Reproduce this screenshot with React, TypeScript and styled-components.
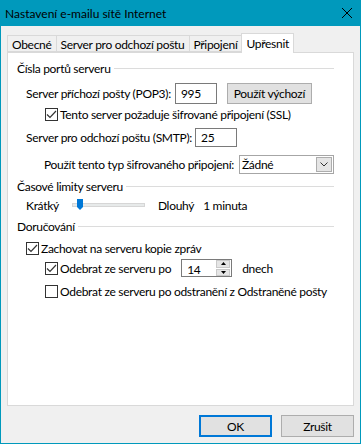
import styled, { createGlobalStyle } from "styled-components";

const GlobalStyle = createGlobalStyle`
  html, body {
    margin: 0;
    padding: 0;
    background: #ffffff;
  }
  body {
    font-family: Lato, "Noto Sans", sans-serif;
    font-size: 12px;
    letter-spacing: -0.3px;
    color: #000000;
  }
  * {
    box-sizing: border-box;
  }
`;

const Frame = styled.div`
  width: 361px;
  height: 444px;
  background: #0099bc;
  padding: 0 1px 1px 1px;
  display: flex;
  flex-direction: column;
`;

const TitleBar = styled.div`
  height: 26px;
  flex: none;
  display: flex;
  align-items: center;
  justify-content: space-between;
  padding: 0 8px 0 4px;
  color: #000000;
  letter-spacing: 0;
`;

const Client = styled.div`
  flex: 1;
  background: #f0f0f0;
  padding: 7px 6px 0 6px;
  display: flex;
  flex-direction: column;
`;

const TabStrip = styled.div`
  display: flex;
  align-items: flex-end;
  height: 19px;
  position: relative;
  z-index: 1;
`;

const Tab = styled.div<{ $active?: boolean }>`
  height: ${(p) => (p.$active ? "20px" : "17px")};
  margin-bottom: ${(p) => (p.$active ? "-1px" : "0")};
  padding: 0 4px;
  display: flex;
  align-items: center;
  padding-top: ${(p) => (p.$active ? "0" : "1px")};
  background: ${(p) => (p.$active ? "#ffffff" : "#f0f0f0")};
  border: 1px solid #d9d9d9;
  border-bottom: ${(p) => (p.$active ? "none" : "1px solid #d9d9d9")};
  margin-left: -1px;
  &:first-child {
    margin-left: 0;
  }
`;

const Panel = styled.div`
  height: 354px;
  background: #ffffff;
  border: 1px solid #d9d9d9;
  padding: 7px 19px 0 9px;
  display: flex;
  flex-direction: column;
`;

const GroupHeading = styled.div<{ $top?: number }>`
  display: flex;
  align-items: center;
  height: 16px;
  margin-top: ${(p) => p.$top ?? 0}px;
  gap: 3px;
  &::after {
    content: "";
    flex: 1;
    height: 1px;
    background: #dcdcdc;
  }
`;

const Row = styled.div<{ $indent: number; $top: number; $h: number }>`
  display: flex;
  align-items: center;
  height: ${(p) => p.$h}px;
  margin-top: ${(p) => p.$top}px;
  padding-left: ${(p) => p.$indent}px;
  white-space: nowrap;
`;

const TextBox = styled.div<{ $w: number; $h: number; $ml: number }>`
  width: ${(p) => p.$w}px;
  height: ${(p) => p.$h}px;
  margin-left: ${(p) => p.$ml}px;
  border: 1px solid #7a7a7a;
  background: #ffffff;
  padding-left: 5px;
  display: flex;
  align-items: center;
`;

const Button = styled.div<{ $default?: boolean }>`
  height: 21px;
  display: flex;
  align-items: center;
  justify-content: center;
  background: #e1e1e1;
  border: ${(p) => (p.$default ? "2px solid #0078d7" : "1px solid #adadad")};
`;

const SideButton = styled(Button)`
  width: 85px;
  margin-left: 10px;
`;

const CheckBox = styled.div`
  width: 13px;
  height: 13px;
  flex: none;
  border: 1px solid #333333;
  background: #ffffff;
  margin-right: 2px;
  display: flex;
  align-items: center;
  justify-content: center;
`;

const Select = styled.div`
  width: 96px;
  height: 19px;
  margin-left: 5px;
  border: 1px solid #a6a6a6;
  background: #ffffff;
  display: flex;
  align-items: center;
  padding: 1px 1px 1px 2px;
`;

const SelectValue = styled.span`
  flex: 1;
`;

const DropButton = styled.div`
  width: 16px;
  height: 15px;
  background: #e5e5e5;
  border: 1px solid #adadad;
  display: flex;
  align-items: center;
  justify-content: center;
`;

const SliderTrack = styled.div`
  position: relative;
  width: 73px;
  height: 4px;
  margin-left: 13px;
  margin-right: 13px;
  background: #e7eaea;
  border: 1px solid #d6d6d6;
`;

const Thumb = styled.svg`
  position: absolute;
  left: 4px;
  top: -5px;
`;

const Spin = styled.div`
  width: 51px;
  height: 18px;
  margin-left: 10px;
  margin-right: 10px;
  border: 1px solid #7a7a7a;
  background: #ffffff;
  display: flex;
  align-items: stretch;
`;

const SpinText = styled.span`
  flex: 1;
  padding-left: 5px;
  display: flex;
  align-items: center;
  padding-top: 2px;
`;

const SpinArrows = styled.div`
  width: 15px;
  display: flex;
  flex-direction: column;
  gap: 1px;
  padding: 0 1px 0 0;
`;

const SpinArrow = styled.div`
  flex: 1;
  background: #e5e5e5;
  border: 1px solid #c9c9c9;
  display: flex;
  align-items: center;
  justify-content: center;
`;

const Spacer = styled.span<{ $w: number }>`
  display: inline-block;
  width: ${(p) => p.$w}px;
`;

const Footer = styled.div`
  display: flex;
  justify-content: flex-end;
  gap: 9px;
  padding-top: 9px;
`;

const FooterButton = styled(Button)`
  width: 73px;
  height: 22px;
`;

const Check = () => (
  <svg width="11" height="11" viewBox="0 0 11 11">
    <path d="M1 5.5 L4 8.5 L10 2" fill="none" stroke="#333333" strokeWidth="1.2" />
  </svg>
);

const Checked = ({ on }: { on: boolean }) => <CheckBox>{on && <Check />}</CheckBox>;

export default function App() {
  return (
    <>
      <GlobalStyle />
      <Frame>
        <TitleBar>
          <span>Nastavení e-mailu sítě Internet</span>
          <svg width="10" height="10" viewBox="0 0 10 10">
            <path d="M0 0 L10 10 M10 0 L0 10" stroke="#000" strokeWidth="1" />
          </svg>
        </TitleBar>
        <Client>
          <TabStrip>
            <Tab>Obecné</Tab>
            <Tab>Server pro odchozí poštu</Tab>
            <Tab>Připojení</Tab>
            <Tab $active>Upřesnit</Tab>
          </TabStrip>
          <Panel>
            <GroupHeading>Čísla portů serveru</GroupHeading>
            <Row $indent={9} $top={7} $h={21}>
              Server příchozí pošty (POP3):
              <TextBox $w={42} $h={21} $ml={4}>995</TextBox>
              <SideButton>Použít výchozí</SideButton>
            </Row>
            <Row $indent={28} $top={3} $h={14}>
              <Checked on />
              Tento server požaduje šifrované připojení (SSL)
            </Row>
            <Row $indent={9} $top={7} $h={19}>
              Server pro odchozí poštu (SMTP):
              <TextBox $w={42} $h={19} $ml={3}>25</TextBox>
            </Row>
            <Row $indent={27} $top={8} $h={19}>
              Použít tento typ šifrovaného připojení:
              <Select>
                <SelectValue>Žádné</SelectValue>
                <DropButton>
                  <svg width="8" height="5" viewBox="0 0 8 5">
                    <path d="M0.5 0.5 L4 4 L7.5 0.5" fill="none" stroke="#333" strokeWidth="1" />
                  </svg>
                </DropButton>
              </Select>
            </Row>

            <GroupHeading $top={4}>Časové limity serveru</GroupHeading>
            <Row $indent={9} $top={3} $h={16}>
              Krátký
              <SliderTrack>
                <Thumb width="6" height="11" viewBox="0 0 6 11">
                  <path d="M0 0 H6 V8 L3 11 L0 8 Z" fill="#0078d7" />
                </Thumb>
              </SliderTrack>
              Dlouhý
              <Spacer $w={9} />1 minuta
            </Row>

            <GroupHeading $top={5}>Doručování</GroupHeading>
            <Row $indent={9} $top={7} $h={14}>
              <Checked on />
              Zachovat na serveru kopie zpráv
            </Row>
            <Row $indent={28} $top={4} $h={18}>
              <Checked on />
              Odebrat ze serveru po
              <Spin>
                <SpinText>14</SpinText>
                <SpinArrows>
                  <SpinArrow>
                    <svg width="5" height="3" viewBox="0 0 5 3">
                      <path d="M0 3 L2.5 0 L5 3 Z" fill="#000" />
                    </svg>
                  </SpinArrow>
                  <SpinArrow>
                    <svg width="5" height="3" viewBox="0 0 5 3">
                      <path d="M0 0 L2.5 3 L5 0 Z" fill="#000" />
                    </svg>
                  </SpinArrow>
                </SpinArrows>
              </Spin>
              dnech
            </Row>
            <Row $indent={28} $top={7} $h={14}>
              <Checked on={false} />
              Odebrat ze serveru po odstranění z Odstraněné pošty
            </Row>
          </Panel>
          <Footer>
            <FooterButton $default>OK</FooterButton>
            <FooterButton>Zrušit</FooterButton>
          </Footer>
        </Client>
      </Frame>
    </>
  );
}
